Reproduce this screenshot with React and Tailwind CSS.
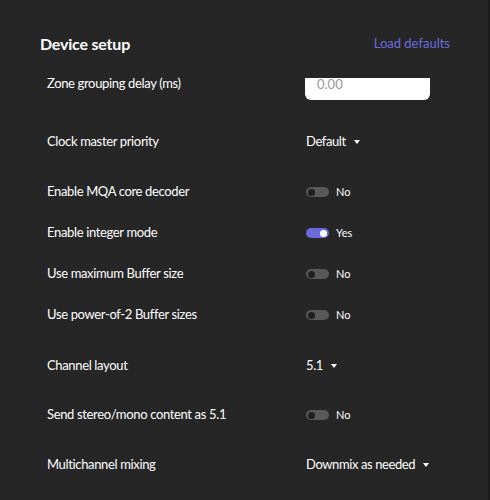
import { useState } from 'react'

const font = { fontFamily: 'Lato, "Open Sans", sans-serif' }

function Toggle({ on, label }) {
  return (
    <div className="flex items-center">
      <span
        className={[
          'relative inline-block h-[10px] w-[23px] rounded-full',
          on ? 'bg-[#6a6ad8]' : 'bg-[#595959]',
        ].join(' ')}
      >
        <span
          className={[
            'absolute top-[1.5px] size-[7px] rounded-full',
            on ? 'right-[2px] bg-white' : 'left-[2px] bg-[#1f1f1f]',
          ].join(' ')}
        />
      </span>
      <span className="ml-[7px] text-[11px] text-white">{label}</span>
    </div>
  )
}

function Dropdown({ value }) {
  return (
    <div className="flex items-center text-[13px] tracking-[-0.4px] text-white">
      {value}
      <span className="ml-[8px] inline-block h-0 w-0 border-x-[3.5px] border-t-[4px] border-x-transparent border-t-white" />
    </div>
  )
}

function Row({ label, mt, children }) {
  return (
    <div className={`flex h-[20px] items-center ${mt}`}>
      <div className="w-[306px] shrink-0 pl-[47px] text-[13px] tracking-[-0.35px] text-white">{label}</div>
      {children}
    </div>
  )
}

export default function App() {
  const [delay] = useState('0.00')

  return (
    <div style={font} className="h-[500px] w-[490px] overflow-hidden border-r-2 border-[#1b1b1b] bg-[#262626] pt-[34px]">
      <div className="flex h-[20px] items-center justify-between pl-[40px] pr-[38px]">
        <h2 className="text-[16px] font-bold tracking-[-0.2px] text-white">Device setup</h2>
        <button type="button" className="text-[13px] text-[#6c6cdc]">
          Load defaults
        </button>
      </div>

      <div className="mt-[20px] flex items-start">
        <div className="flex h-[20px] w-[305px] shrink-0 items-center pl-[47px] text-[13px] tracking-[-0.35px] text-white">
          Zone grouping delay (ms)
        </div>
        <div className="mt-[4px] h-[22px] w-[125px] rounded-b-[6px] bg-white pl-[12px] text-[13px] leading-[13px] text-[#9a9a9a]">
          {delay}
        </div>
      </div>

      <Row label="Clock master priority" mt="mt-[32px]">
        <Dropdown value="Default" />
      </Row>
      <Row label="Enable MQA core decoder" mt="mt-[30px]">
        <Toggle label="No" />
      </Row>
      <Row label="Enable integer mode" mt="mt-[21px]">
        <Toggle on label="Yes" />
      </Row>
      <Row label="Use maximum Buffer size" mt="mt-[21px]">
        <Toggle label="No" />
      </Row>
      <Row label="Use power-of-2 Buffer sizes" mt="mt-[21px]">
        <Toggle label="No" />
      </Row>
      <Row label="Channel layout" mt="mt-[31px]">
        <Dropdown value="5.1" />
      </Row>
      <Row label="Send stereo/mono content as 5.1" mt="mt-[29px]">
        <Toggle label="No" />
      </Row>
      <Row label="Multichannel mixing" mt="mt-[30px]">
        <Dropdown value="Downmix as needed" />
      </Row>
    </div>
  )
}
